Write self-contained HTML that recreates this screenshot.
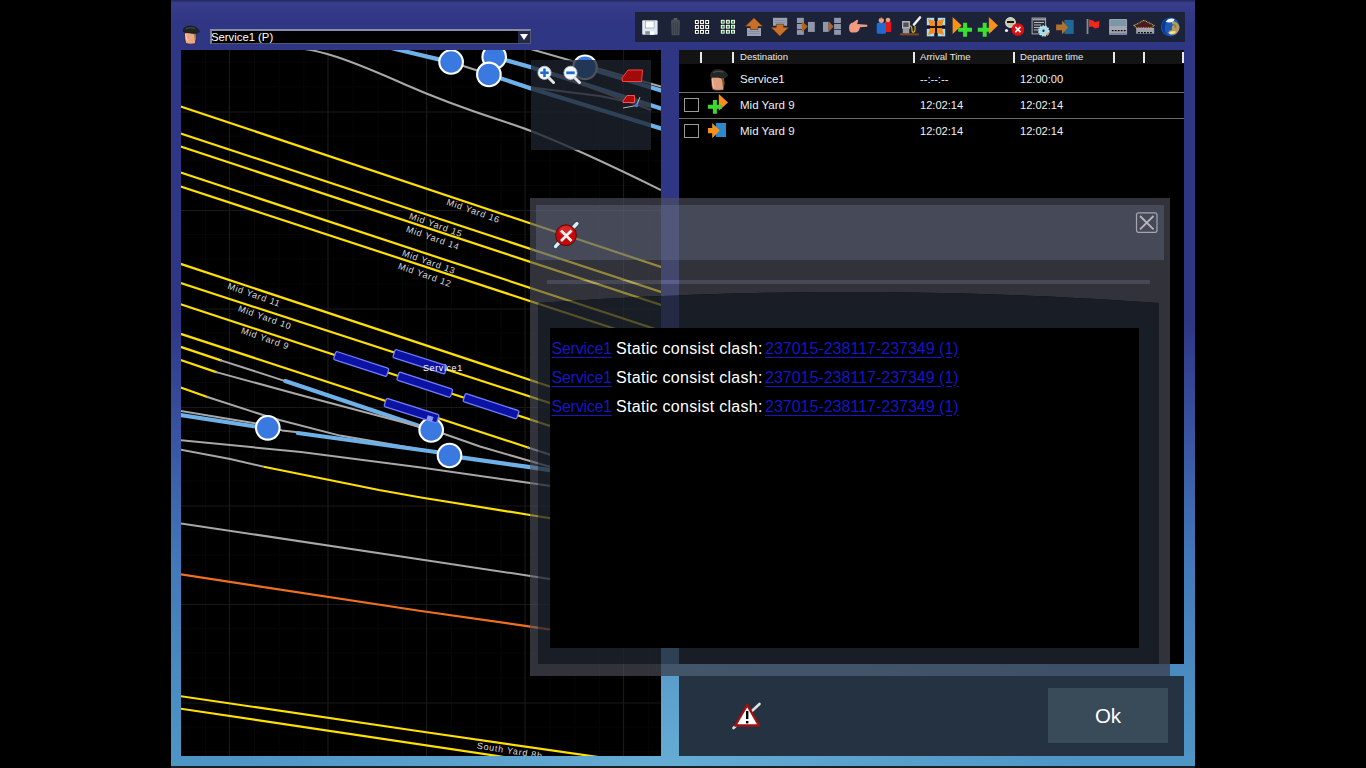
<!DOCTYPE html>
<html><head><meta charset="utf-8">
<style>
*{margin:0;padding:0;box-sizing:border-box}
html,body{width:1366px;height:768px;overflow:hidden;background:#000;font-family:"Liberation Sans",sans-serif;position:relative}
.a{position:absolute}
#frame{left:171px;top:0;width:1024px;height:766px;background:radial-gradient(ellipse 420px 260px at 490px 766px,rgba(140,210,235,0.38),rgba(140,210,235,0) 100%),linear-gradient(180deg,#23285e 0px,#3a3f8c 3px,#343a88 10px,#2f3684 24px,#2f3684 320px,#3a58a4 450px,#4278b8 560px,#4a8cc0 680px,#4e96c6 766px)}
#bottomdark{left:171px;top:766px;width:1024px;height:2px;background:#1a2228}
#dd{left:210px;top:29px;width:321px;height:15px;background:#000;border-top:2px solid #8a8ca8;border-left:2px solid #7c7e9c;border-bottom:1px solid #555870;border-right:1px solid #55586a}
#ddtxt{left:211px;top:30px;color:#fff;font-size:11.3px;line-height:14px;white-space:nowrap}
#tb{left:635px;top:12px;width:550px;height:30px;background:#1c2238}
#map{left:181px;top:50px;width:480px;height:706px;background:#000;overflow:hidden}
#tbl{left:679px;top:50px;width:505px;height:614px;background:#000}
#thead{left:679px;top:50px;width:505px;height:14px;background:#141414}
.hs{position:absolute;top:51.5px;width:1.6px;height:11.5px;background:#e8e8e8}
.ht{position:absolute;top:51px;color:#e8e8e8;font-size:9.6px;line-height:12px;white-space:nowrap}
.rt{position:absolute;color:#f0f0f0;font-size:11.5px;line-height:13px;white-space:nowrap;margin-top:1px}
.rl{position:absolute;left:679px;width:505px;height:1px;background:#6a6a6a}
.cb{position:absolute;left:684px;width:15px;height:14px;border:1px solid #9a9a9a;background:#000}
#bp{left:679px;top:676px;width:505px;height:80px;background:#243242}
#okb{left:1048px;top:688px;width:120px;height:55px;background:#394a58;color:#fff;font-size:20.5px;line-height:55px;text-align:center}
#dblack{left:550px;top:328px;width:589px;height:320px;background:#000}
.msg{position:absolute;font-size:16px;line-height:18px;white-space:nowrap;margin-top:1.5px}
.lnk{color:#1616c4;text-decoration:underline;text-underline-offset:3px}
.wt{color:#fff;letter-spacing:0.3px}
</style></head>
<body>
<div id="frame" class="a"></div>
<div id="bottomdark" class="a"></div>

<!-- face icon -->
<svg class="a" style="left:180px;top:22px" width="24" height="26" viewBox="180 22 24 26">
<path d="M184.8 32.5 Q184.3 39 185.8 43.6 Q190 44.6 195.2 43.8 Q196.5 38 195.8 32.5 Z" fill="#eaa888" stroke="#2a1830" stroke-width="0.7"/>
<path d="M185.5 34 Q186 38 187.5 41" stroke="#f8d0b8" stroke-width="1.2" fill="none"/>
<path d="M193 32.5 Q196.5 34 196.2 38 Q195.8 40 194.8 41 Q195 36 193 32.5Z" fill="#a87830"/>
<path d="M183.2 31.5 Q182.8 27 188.5 26 Q197 25.5 199.5 31.8 Q196 34.5 190 33 Q186 32.8 183.2 31.5Z" fill="#1e2422" stroke="#101018" stroke-width="0.6"/>
<path d="M186 28.5 Q190.5 27 195 28.3" stroke="#4a504c" stroke-width="1" fill="none"/>
</svg>
<div id="dd" class="a"></div>
<div id="ddtxt" class="a">Service1 (P)</div>
<svg class="a" style="left:518px;top:31px" width="12" height="12" viewBox="0 0 12 12"><rect width="12" height="12" fill="#22284e"/><path d="M2 3 L10 3 L6 9Z" fill="#fff"/></svg>

<div id="tb" class="a"></div>
<div id="tbicons"><svg class="a" style="left:635px;top:12px" width="550" height="30" viewBox="635 12 550 30">
<!-- 1 save -->
<rect x="642.2" y="20.2" width="15.4" height="14.6" rx="1" fill="#dfe9f4"/>
<rect x="645.6" y="21" width="8.5" height="7" fill="#fff" stroke="#8090a0" stroke-width="0.6"/>
<rect x="645.3" y="31.2" width="4.5" height="3.6" fill="#8a8f96"/>
<rect x="650" y="31.5" width="4" height="3.3" fill="#fff"/>
<!-- 2 trash -->
<path d="M671 20.5 Q675.3 17.5 680 20.5 L679.5 35.3 L671.5 35.3 Z" fill="#474b55"/>
<rect x="673.5" y="18" width="4" height="2" rx="1" fill="#5a5e68"/>
<path d="M673.5 23 L673.5 34 M675.5 23 L675.5 34 M677.5 23 L677.5 34" stroke="#3a3d45" stroke-width="0.8"/>
<!-- 3 grid white -->
<g fill="#fff" stroke="#000" stroke-width="0.3">
<rect x="694.8" y="19.9" width="4.2" height="4.2"/><rect x="699.9" y="19.9" width="4.2" height="4.2"/><rect x="705" y="19.9" width="4.2" height="4.2"/>
<rect x="694.8" y="24.9" width="4.2" height="4.2"/><rect x="699.9" y="24.9" width="4.2" height="4.2"/><rect x="705" y="24.9" width="4.2" height="4.2"/>
<rect x="694.8" y="29.8" width="4.2" height="4.2"/><rect x="699.9" y="29.8" width="4.2" height="4.2"/><rect x="705" y="29.8" width="4.2" height="4.2"/>
</g>
<g fill="#000">
<rect x="696" y="21.1" width="1.8" height="1.8"/><rect x="701.1" y="21.1" width="1.8" height="1.8"/><rect x="706.2" y="21.1" width="1.8" height="1.8"/>
<rect x="696" y="26.1" width="1.8" height="1.8"/><rect x="701.1" y="26.1" width="1.8" height="1.8"/><rect x="706.2" y="26.1" width="1.8" height="1.8"/>
<rect x="696" y="31" width="1.8" height="1.8"/><rect x="701.1" y="31" width="1.8" height="1.8"/><rect x="706.2" y="31" width="1.8" height="1.8"/>
</g>
<!-- 4 grid green -->
<g fill="#fff" stroke="#000" stroke-width="0.3">
<rect x="720.7" y="19.7" width="4.2" height="4.2"/><rect x="725.8" y="19.7" width="4.2" height="4.2"/><rect x="730.9" y="19.7" width="4.2" height="4.2"/>
<rect x="720.7" y="24.7" width="4.2" height="4.2"/><rect x="725.8" y="24.7" width="4.2" height="4.2"/><rect x="730.9" y="24.7" width="4.2" height="4.2"/>
<rect x="720.7" y="29.7" width="4.2" height="4.2"/><rect x="725.8" y="29.7" width="4.2" height="4.2"/><rect x="730.9" y="29.7" width="4.2" height="4.2"/>
</g>
<g fill="#1a9a2a">
<rect x="721.8" y="20.8" width="2" height="2"/><rect x="726.9" y="20.8" width="2" height="2"/><rect x="732" y="20.8" width="2" height="2"/>
<rect x="721.8" y="25.8" width="2" height="2"/><rect x="726.9" y="25.8" width="2" height="2"/><rect x="732" y="25.8" width="2" height="2"/>
<rect x="721.8" y="30.8" width="2" height="2"/><rect x="726.9" y="30.8" width="2" height="2"/><rect x="732" y="30.8" width="2" height="2"/>
</g>
<!-- 5 up -->
<rect x="747" y="28" width="14" height="8" fill="#9aa2b4"/>
<path d="M748.5 31.5 H759.5 M748.5 33.5 H759.5" stroke="#7a8294" stroke-width="0.6"/>
<path d="M754 17.8 L763 26.6 L758 26.6 L758 29.5 L750.3 29.5 L750.3 26.6 L745 26.6 Z" fill="#c87028" stroke="#3a2010" stroke-width="0.5"/>
<!-- 6 down -->
<rect x="773" y="17.8" width="14.2" height="8" fill="#9aa2b4"/>
<path d="M774.5 20.5 H785.5 M774.5 22.5 H785.5" stroke="#7a8294" stroke-width="0.6"/>
<path d="M776.3 24.2 L783.6 24.2 L783.6 27.2 L789 27.2 L779.8 36.2 L770.8 27.2 L776.3 27.2 Z" fill="#c87028" stroke="#3a2010" stroke-width="0.5"/>
<!-- 7 split -->
<g fill="#8e98aa"><rect x="796.9" y="17.8" width="7" height="5.2"/><rect x="796.9" y="23.9" width="7" height="5.2"/><rect x="796.9" y="29.8" width="7" height="5"/><rect x="808" y="21.9" width="6.8" height="10"/></g>
<path d="M801.9 21.3 L807.8 26.5 L801.9 32.2 Z" fill="#b06428"/>
<!-- 8 merge -->
<g fill="#8e98aa"><rect x="823" y="21.9" width="5.6" height="10"/><rect x="834.1" y="17.8" width="6.8" height="5.2"/><rect x="834.1" y="23.9" width="6.8" height="5.2"/><rect x="834.1" y="29.8" width="6.8" height="5"/></g>
<path d="M828.6 21.3 L833.6 26.5 L828.6 31.9 Z" fill="#b06428"/>
<!-- 9 hand -->
<path d="M849 28 Q849 23 853 22.5 L857 19.8 Q858.5 19.5 858 21.5 L857 24 L867 24.8 Q868 26 867 26.8 L860 27.2 Q859 32.5 855 32.6 L851 32.6 Q849 31.5 849 28 Z" fill="#f09a80"/>
<!-- 10 people -->
<rect x="884.9" y="21.5" width="6.4" height="10.5" rx="1" fill="#e01818"/>
<circle cx="888" cy="20" r="2.3" fill="#e8a080"/>
<rect x="876.7" y="22.8" width="9.3" height="11" rx="1.5" fill="#1f6cd0"/>
<circle cx="881.3" cy="20.3" r="2.6" fill="#e8a080"/>
<path d="M880 18.3 Q881.3 17 883 18.5" stroke="#8a5020" stroke-width="1" fill="none"/>
<!-- 11 fuel -->
<rect x="900" y="33.3" width="18.8" height="2.1" fill="#7a4820"/>
<rect x="902" y="21" width="8" height="7.8" fill="#b0b2b8"/>
<rect x="903.3" y="22.5" width="5.3" height="4.5" fill="#505458"/>
<rect x="902.8" y="28.8" width="6.4" height="4.5" fill="#9a9ca2"/>
<path d="M910 26 Q912 26 912 30 Q912 33 914 32 Q915.5 31 915 26" stroke="#e8c020" stroke-width="1.1" fill="none"/>
<path d="M914 24.5 L920 17.5" stroke="#f0f0f4" stroke-width="2.6" stroke-linecap="round"/>
<!-- 12 arrows in -->
<g fill="#a8dcf0"><rect x="926.8" y="17.8" width="7.4" height="7.4"/><rect x="937.8" y="17.8" width="7.4" height="7.4"/><rect x="926.8" y="28.9" width="7.4" height="7.4"/><rect x="937.8" y="28.9" width="7.4" height="7.4"/></g>
<g fill="#f08a20"><path d="M928 19 L934.7 25.7 L930 25.7 Z M928 19 L934.7 25.7 L934.7 21 Z"/><path d="M944 19 L937.3 25.7 L942 25.7 Z M944 19 L937.3 25.7 L937.3 21 Z"/><path d="M928 35 L934.7 28.3 L930 28.3 Z M928 35 L934.7 28.3 L934.7 33 Z"/><path d="M944 35 L937.3 28.3 L942 28.3 Z M944 35 L937.3 28.3 L937.3 33 Z"/></g>
<g fill="#f08a20"><rect x="930" y="21" width="5" height="5"/><rect x="937" y="21" width="5" height="5"/><rect x="930" y="28" width="5" height="5"/><rect x="937" y="28" width="5" height="5"/></g>
<path d="M936 18 V36 M927 27 H945" stroke="#1a1010" stroke-width="1.4"/>
<!-- 13 play + plus -->
<path d="M952.6 16.9 L961.7 25.4 L952.6 33.9 Z" fill="#f8901c"/>
<path d="M958.2 29.8 H972 M965.1 22.8 V36.8" stroke="#3ae030" stroke-width="4"/>
<!-- 14 plus + play -->
<path d="M977.8 29.8 H991.6 M984.7 22.8 V36.8" stroke="#3ae030" stroke-width="4"/>
<path d="M988.9 16.9 L998 25.4 L988.9 33.9 Z" fill="#f8901c"/>
<!-- 15 signal x -->
<circle cx="1010.5" cy="22.5" r="4.8" fill="#c8c8a0" stroke="#d8dce8" stroke-width="1.2"/>
<rect x="1007" y="21" width="7" height="2" fill="#111"/>
<circle cx="1006.5" cy="30.5" r="1.6" fill="#eee"/>
<circle cx="1017.9" cy="29.5" r="6.3" fill="#e01010"/>
<path d="M1015.3 26.9 L1020.5 32.1 M1020.5 26.9 L1015.3 32.1" stroke="#fff" stroke-width="1.6"/>
<!-- 16 doc gear -->
<rect x="1032.1" y="18.1" width="13.5" height="15.8" fill="#2a2e38" stroke="#a8aab0" stroke-width="1"/>
<rect x="1032.6" y="18.6" width="12.5" height="1.8" fill="#9a9ca2"/>
<path d="M1034 22.5 H1044 M1034 25 H1041 M1034 27.5 H1041 M1034 30 H1040" stroke="#b8bac0" stroke-width="1"/>
<circle cx="1043.8" cy="31" r="5" fill="#a8dce8" stroke="#c8ecf4" stroke-width="1.5" stroke-dasharray="1.5 1.2"/>
<circle cx="1043.5" cy="30.8" r="1.2" fill="#0a3a40"/>
<path d="M1046 34 L1050 32 L1047.5 36 Z" fill="#f89030"/>
<!-- 17 arrow into blue -->
<rect x="1064.3" y="19.9" width="9.4" height="14" fill="#1f6898"/>
<path d="M1056.1 24.5 L1062 24.5 L1062 20.4 L1068 27.4 L1062 34.5 L1062 30.3 L1056.1 30.3 Z" fill="#b07030"/>
<!-- 18 flag -->
<rect x="1086.6" y="19" width="1.8" height="15" fill="#8a8a90"/>
<path d="M1089 19.5 L1093 20.5 L1095 22 L1099.5 21 L1099 27.5 L1095 28.6 L1092.5 26.5 L1089 27 Z" fill="#f02818"/>
<!-- 19 box -->
<rect x="1109.1" y="18.9" width="18" height="16.1" rx="1" fill="#9ca2b2"/>
<rect x="1110.3" y="19.9" width="15.8" height="6.3" fill="#7a98a6"/>
<rect x="1109.6" y="26.2" width="17" height="6.6" fill="#a4a8b6"/>
<rect x="1109.6" y="32.8" width="17" height="2.2" fill="#7c8492"/>
<path d="M1111.8 30.6 H1125.8" stroke="#050505" stroke-width="1.2" stroke-dasharray="1.8 1.2"/>
<!-- 20 roof -->
<rect x="1136.2" y="28" width="18" height="5.7" fill="#9ca0b0"/>
<path d="M1134 25.5 L1144.1 20.2 L1154.2 25.5 L1151.6 27.9 L1136.5 27.9 Z" fill="#4a1a28" stroke="#c8b848" stroke-width="1.1" stroke-dasharray="1 0.7"/>
<path d="M1138 32.6 H1153" stroke="#050505" stroke-width="1.1" stroke-dasharray="1.8 1.2"/>
<!-- 21 globe -->
<circle cx="1170.2" cy="26.8" r="9.4" fill="#1c58b8"/>
<path d="M1161.5 27 Q1162 20 1168 18.2 Q1164 24 1165 31 Q1166 34 1169 36 Q1163 34 1161.5 27Z" fill="#0a3a90"/>
<path d="M1172 21 Q1178 21.5 1179.5 27 Q1179.5 32 1175 34.5 Q1170 35 1168 32.5 Q1169 30 1172 30 Q1171 27 1173 25 Q1171 23 1172 21Z" fill="#b89a60"/>
<path d="M1168.5 33 Q1172 30 1176 31.5 Q1175 34.5 1170.5 34.5Z" fill="#f0e090"/>
<path d="M1173 24.5 Q1176 25 1175.5 28" stroke="#788a30" stroke-width="1.6" fill="none"/>
<path d="M1165.5 21.5 Q1169 17.5 1174.5 19 Q1174 22 1170 22.5 Q1167 22.5 1165.5 21.5Z" fill="#f4f6f8"/>
</svg>
</div>

<div id="map" class="a">
<svg width="480" height="706" viewBox="181 50 480 706" id="msvg"><line x1="33.0" y1="50" x2="33.0" y2="756" stroke="#070707" stroke-width="1"/>
<line x1="57.6" y1="50" x2="57.6" y2="756" stroke="#070707" stroke-width="1"/>
<line x1="82.2" y1="50" x2="82.2" y2="756" stroke="#070707" stroke-width="1"/>
<line x1="106.9" y1="50" x2="106.9" y2="756" stroke="#070707" stroke-width="1"/>
<line x1="131.5" y1="50" x2="131.5" y2="756" stroke="#070707" stroke-width="1"/>
<line x1="156.1" y1="50" x2="156.1" y2="756" stroke="#070707" stroke-width="1"/>
<line x1="180.8" y1="50" x2="180.8" y2="756" stroke="#070707" stroke-width="1"/>
<line x1="205.4" y1="50" x2="205.4" y2="756" stroke="#070707" stroke-width="1"/>
<line x1="254.6" y1="50" x2="254.6" y2="756" stroke="#070707" stroke-width="1"/>
<line x1="279.2" y1="50" x2="279.2" y2="756" stroke="#070707" stroke-width="1"/>
<line x1="303.9" y1="50" x2="303.9" y2="756" stroke="#070707" stroke-width="1"/>
<line x1="353.1" y1="50" x2="353.1" y2="756" stroke="#070707" stroke-width="1"/>
<line x1="377.8" y1="50" x2="377.8" y2="756" stroke="#070707" stroke-width="1"/>
<line x1="402.4" y1="50" x2="402.4" y2="756" stroke="#070707" stroke-width="1"/>
<line x1="451.6" y1="50" x2="451.6" y2="756" stroke="#070707" stroke-width="1"/>
<line x1="476.2" y1="50" x2="476.2" y2="756" stroke="#070707" stroke-width="1"/>
<line x1="500.9" y1="50" x2="500.9" y2="756" stroke="#070707" stroke-width="1"/>
<line x1="550.1" y1="50" x2="550.1" y2="756" stroke="#070707" stroke-width="1"/>
<line x1="574.8" y1="50" x2="574.8" y2="756" stroke="#070707" stroke-width="1"/>
<line x1="599.4" y1="50" x2="599.4" y2="756" stroke="#070707" stroke-width="1"/>
<line x1="648.6" y1="50" x2="648.6" y2="756" stroke="#070707" stroke-width="1"/>
<line x1="181" y1="13.0" x2="661" y2="13.0" stroke="#070707" stroke-width="1"/>
<line x1="181" y1="37.6" x2="661" y2="37.6" stroke="#070707" stroke-width="1"/>
<line x1="181" y1="62.2" x2="661" y2="62.2" stroke="#070707" stroke-width="1"/>
<line x1="181" y1="86.9" x2="661" y2="86.9" stroke="#070707" stroke-width="1"/>
<line x1="181" y1="136.1" x2="661" y2="136.1" stroke="#070707" stroke-width="1"/>
<line x1="181" y1="160.8" x2="661" y2="160.8" stroke="#070707" stroke-width="1"/>
<line x1="181" y1="185.4" x2="661" y2="185.4" stroke="#070707" stroke-width="1"/>
<line x1="181" y1="234.6" x2="661" y2="234.6" stroke="#070707" stroke-width="1"/>
<line x1="181" y1="259.2" x2="661" y2="259.2" stroke="#070707" stroke-width="1"/>
<line x1="181" y1="283.9" x2="661" y2="283.9" stroke="#070707" stroke-width="1"/>
<line x1="181" y1="333.1" x2="661" y2="333.1" stroke="#070707" stroke-width="1"/>
<line x1="181" y1="357.8" x2="661" y2="357.8" stroke="#070707" stroke-width="1"/>
<line x1="181" y1="382.4" x2="661" y2="382.4" stroke="#070707" stroke-width="1"/>
<line x1="181" y1="431.6" x2="661" y2="431.6" stroke="#070707" stroke-width="1"/>
<line x1="181" y1="456.2" x2="661" y2="456.2" stroke="#070707" stroke-width="1"/>
<line x1="181" y1="480.9" x2="661" y2="480.9" stroke="#070707" stroke-width="1"/>
<line x1="181" y1="530.1" x2="661" y2="530.1" stroke="#070707" stroke-width="1"/>
<line x1="181" y1="554.8" x2="661" y2="554.8" stroke="#070707" stroke-width="1"/>
<line x1="181" y1="579.4" x2="661" y2="579.4" stroke="#070707" stroke-width="1"/>
<line x1="181" y1="628.6" x2="661" y2="628.6" stroke="#070707" stroke-width="1"/>
<line x1="181" y1="653.2" x2="661" y2="653.2" stroke="#070707" stroke-width="1"/>
<line x1="181" y1="677.9" x2="661" y2="677.9" stroke="#070707" stroke-width="1"/>
<line x1="181" y1="727.1" x2="661" y2="727.1" stroke="#070707" stroke-width="1"/>
<line x1="181" y1="751.8" x2="661" y2="751.8" stroke="#070707" stroke-width="1"/>
<line x1="229.5" y1="50" x2="229.5" y2="756" stroke="#191919" stroke-width="1.2"/>
<line x1="328.0" y1="50" x2="328.0" y2="756" stroke="#191919" stroke-width="1.2"/>
<line x1="426.5" y1="50" x2="426.5" y2="756" stroke="#191919" stroke-width="1.2"/>
<line x1="525.0" y1="50" x2="525.0" y2="756" stroke="#191919" stroke-width="1.2"/>
<line x1="623.5" y1="50" x2="623.5" y2="756" stroke="#191919" stroke-width="1.2"/>
<line x1="181" y1="112.0" x2="661" y2="112.0" stroke="#191919" stroke-width="1.2"/>
<line x1="181" y1="210.5" x2="661" y2="210.5" stroke="#191919" stroke-width="1.2"/>
<line x1="181" y1="309.0" x2="661" y2="309.0" stroke="#191919" stroke-width="1.2"/>
<line x1="181" y1="407.5" x2="661" y2="407.5" stroke="#191919" stroke-width="1.2"/>
<line x1="181" y1="506.0" x2="661" y2="506.0" stroke="#191919" stroke-width="1.2"/>
<line x1="181" y1="604.5" x2="661" y2="604.5" stroke="#191919" stroke-width="1.2"/>
<line x1="181" y1="703.0" x2="661" y2="703.0" stroke="#191919" stroke-width="1.2"/>
<path d="M178,105.6 L661,267" stroke="#ffe000" stroke-width="2.2" fill="none" stroke-linecap="round" stroke-linejoin="round"/>
<path d="M178,132.6 L661,292" stroke="#ffe000" stroke-width="2.2" fill="none" stroke-linecap="round" stroke-linejoin="round"/>
<path d="M178,145.7 L661,305" stroke="#ffe000" stroke-width="2.2" fill="none" stroke-linecap="round" stroke-linejoin="round"/>
<path d="M178,171.7 L661,331" stroke="#ffe000" stroke-width="2.2" fill="none" stroke-linecap="round" stroke-linejoin="round"/>
<path d="M178,185.7 L661,344" stroke="#ffe000" stroke-width="2.2" fill="none" stroke-linecap="round" stroke-linejoin="round"/>
<path d="M296,48 C320,50 345,58 405,84.5 S500,119 531,131 S600,160 661,190" stroke="#a8a8a8" stroke-width="2" fill="none"/>
<path d="M520,46 L661,86.5" stroke="#a8a8a8" stroke-width="2" fill="none" stroke-linecap="round" stroke-linejoin="round"/>
<path d="M380,45 L398.4,49.8 L438.8,59.4 L451,62" stroke="#6eb0e8" stroke-width="4.2" fill="none" stroke-linecap="round" stroke-linejoin="round"/>
<path d="M451,62 L475.7,70 L489,74.4" stroke="#a8a8a8" stroke-width="2" fill="none" stroke-linecap="round" stroke-linejoin="round"/>
<path d="M494,56.8 L531.1,67.3 L661,108.5" stroke="#6eb0e8" stroke-width="4.2" fill="none" stroke-linecap="round" stroke-linejoin="round"/>
<path d="M489,74.4 L531.1,88.4 L661,128.5" stroke="#6eb0e8" stroke-width="4.2" fill="none" stroke-linecap="round" stroke-linejoin="round"/>
<path d="M585,67.3 L661,90.5" stroke="#6eb0e8" stroke-width="4.2" fill="none" stroke-linecap="round" stroke-linejoin="round"/>
<path d="M552.3,73.2 L650.4,109.7" stroke="#9a9aa8" stroke-width="2" fill="none" stroke-linecap="round" stroke-linejoin="round"/>
<path d="M531.5,87.6 L600,96 L650.4,106.4" stroke="#9a9aa8" stroke-width="2" fill="none" stroke-linecap="round" stroke-linejoin="round"/>
<path d="M178,263 L661,423.4" stroke="#ffe000" stroke-width="2.2" fill="none" stroke-linecap="round" stroke-linejoin="round"/>
<path d="M178,282.2 L661,439.2" stroke="#ffe000" stroke-width="2.2" fill="none" stroke-linecap="round" stroke-linejoin="round"/>
<path d="M178,303.3 L661,462.7" stroke="#ffe000" stroke-width="2.2" fill="none" stroke-linecap="round" stroke-linejoin="round"/>
<path d="M178,333 L528,447.5" stroke="#ffe000" stroke-width="2.2" fill="none" stroke-linecap="round" stroke-linejoin="round"/>
<path d="M528,447.5 L661,491" stroke="#a8a8a8" stroke-width="2" fill="none" stroke-linecap="round" stroke-linejoin="round"/>
<path d="M178,346 L221,360.4" stroke="#ffe000" stroke-width="2.2" fill="none" stroke-linecap="round" stroke-linejoin="round"/>
<path d="M221,360.4 L285.3,381.1" stroke="#a8a8a8" stroke-width="2" fill="none" stroke-linecap="round" stroke-linejoin="round"/>
<path d="M285.3,381.1 L431,430" stroke="#6eb0e8" stroke-width="4.2" fill="none" stroke-linecap="round" stroke-linejoin="round"/>
<path d="M178,359.2 L216.2,372.1" stroke="#ffe000" stroke-width="2.2" fill="none" stroke-linecap="round" stroke-linejoin="round"/>
<path d="M216.2,372.1 L301,395.2 L418,426.3 L431,430" stroke="#a8a8a8" stroke-width="2" fill="none" stroke-linecap="round" stroke-linejoin="round"/>
<path d="M178,386.6 L207.4,397" stroke="#ffe000" stroke-width="2.2" fill="none" stroke-linecap="round" stroke-linejoin="round"/>
<path d="M207.4,397 L263,415 L279.5,420 L340,435.6 L436,452" stroke="#a8a8a8" stroke-width="2" fill="none" stroke-linecap="round" stroke-linejoin="round"/>
<path d="M178,410.5 L254.8,423.3 L282.1,430.4 L297.8,432.3" stroke="#a8a8a8" stroke-width="2" fill="none" stroke-linecap="round" stroke-linejoin="round"/>
<path d="M178,414.6 L253.7,426.25 L267.8,427.8" stroke="#6eb0e8" stroke-width="4.2" fill="none" stroke-linecap="round" stroke-linejoin="round"/>
<path d="M297.8,433 L436,452 L462.5,457.6 L530,467.2 L661,487" stroke="#6eb0e8" stroke-width="4.2" fill="none" stroke-linecap="round" stroke-linejoin="round"/>
<path d="M178,440 L301,452 L421,467.5 L530,483 L661,502" stroke="#a8a8a8" stroke-width="2" fill="none" stroke-linecap="round" stroke-linejoin="round"/>
<path d="M178,449.2 L230.2,459.1 L265,467" stroke="#a8a8a8" stroke-width="2" fill="none" stroke-linecap="round" stroke-linejoin="round"/>
<path d="M265,467 L379,490 L421,497.5 L530,515 L661,536" stroke="#ffe000" stroke-width="2.2" fill="none" stroke-linecap="round" stroke-linejoin="round"/>
<path d="M431,430 L444.4,434 L480,446.5 L530,461 L661,499" stroke="#a8a8a8" stroke-width="2" fill="none" stroke-linecap="round" stroke-linejoin="round"/>
<path d="M178,523 L421,559.4 L530.4,576 L661,596" stroke="#a8a8a8" stroke-width="2" fill="none" stroke-linecap="round" stroke-linejoin="round"/>
<path d="M178,574 L421,611 L530.4,626.6 L661,646" stroke="#f07020" stroke-width="2.2" fill="none" stroke-linecap="round" stroke-linejoin="round"/>
<path d="M178,695.8 L421,731.5 L588,755.6 L661,766" stroke="#ffe000" stroke-width="2.2" fill="none" stroke-linecap="round" stroke-linejoin="round"/>
<path d="M178,708.3 L494.8,755.6 L510,758" stroke="#ffe000" stroke-width="2.2" fill="none" stroke-linecap="round" stroke-linejoin="round"/>
<circle cx="451.1" cy="62" r="11.8" fill="#3a7ae0" stroke="#fff" stroke-width="2.1"/>
<circle cx="494.2" cy="56.8" r="11.8" fill="#3a7ae0" stroke="#fff" stroke-width="2.1"/>
<circle cx="488.9" cy="74.4" r="11.8" fill="#3a7ae0" stroke="#fff" stroke-width="2.1"/>
<circle cx="585" cy="67.3" r="11.8" fill="#3a7ae0" stroke="#fff" stroke-width="2.1"/>
<circle cx="267.8" cy="427.8" r="11.8" fill="#3a7ae0" stroke="#fff" stroke-width="2.1"/>
<circle cx="431.2" cy="430" r="11.8" fill="#3a7ae0" stroke="#fff" stroke-width="2.1"/>
<circle cx="449.5" cy="455.5" r="11.8" fill="#3a7ae0" stroke="#fff" stroke-width="2.1"/>
<g transform="translate(361.3,364.0) rotate(18.0)"><rect x="-27.9" y="-4.3" width="55.7" height="8.6" rx="1.5" fill="#0c12a4" stroke="#7080ff" stroke-width="1.3"/></g>
<g transform="translate(419.9,361.7) rotate(17.8)"><rect x="-27.2" y="-4.3" width="54.4" height="8.6" rx="1.5" fill="#0c12a4" stroke="#7080ff" stroke-width="1.3"/></g>
<g transform="translate(424.8,384.7) rotate(18.2)"><rect x="-28.2" y="-4.3" width="56.4" height="8.6" rx="1.5" fill="#0c12a4" stroke="#7080ff" stroke-width="1.3"/></g>
<g transform="translate(411.6,410.6) rotate(17.5)"><rect x="-27.7" y="-4.3" width="55.3" height="8.6" rx="1.5" fill="#0c12a4" stroke="#7080ff" stroke-width="1.3"/></g>
<g transform="translate(491.1,406.2) rotate(18.1)"><rect x="-28.3" y="-4.3" width="56.5" height="8.6" rx="1.5" fill="#0c12a4" stroke="#7080ff" stroke-width="1.3"/></g>
<rect x="427" y="416" width="6" height="5" fill="#8a9af8" transform="rotate(18 430 418)"/>
<text x="446" y="204.4" transform="rotate(19.5 446 204.4)" font-family="Liberation Sans" font-size="9" fill="#dcdcdc" letter-spacing="0.75">Mid Yard 16</text>
<text x="408.5" y="218.4" transform="rotate(19.5 408.5 218.4)" font-family="Liberation Sans" font-size="9" fill="#dcdcdc" letter-spacing="0.75">Mid Yard 15</text>
<text x="405.5" y="231.4" transform="rotate(19.5 405.5 231.4)" font-family="Liberation Sans" font-size="9" fill="#dcdcdc" letter-spacing="0.75">Mid Yard 14</text>
<text x="401.5" y="255.4" transform="rotate(19.5 401.5 255.4)" font-family="Liberation Sans" font-size="9" fill="#dcdcdc" letter-spacing="0.75">Mid Yard 13</text>
<text x="397.5" y="268.4" transform="rotate(19.5 397.5 268.4)" font-family="Liberation Sans" font-size="9" fill="#dcdcdc" letter-spacing="0.75">Mid Yard 12</text>
<text x="227" y="288.4" transform="rotate(19.5 227 288.4)" font-family="Liberation Sans" font-size="9" fill="#dcdcdc" letter-spacing="0.75">Mid Yard 11</text>
<text x="237.5" y="310.9" transform="rotate(19.5 237.5 310.9)" font-family="Liberation Sans" font-size="9" fill="#dcdcdc" letter-spacing="0.75">Mid Yard 10</text>
<text x="240.5" y="332.9" transform="rotate(19.5 240.5 332.9)" font-family="Liberation Sans" font-size="9" fill="#dcdcdc" letter-spacing="0.75">Mid Yard 9</text>
<text x="476.5" y="748.4" transform="rotate(9 476.5 748.4)" font-family="Liberation Sans" font-size="9" fill="#dcdcdc" letter-spacing="0.75">South Yard 8b</text>
<text x="423" y="371" font-family="Liberation Sans" font-size="9" fill="#fff" letter-spacing="0.6">Service1</text></svg>
</div>

<div id="tbl" class="a"></div>
<div id="thead" class="a"></div>
<div class="hs" style="left:700px"></div>
<div class="hs" style="left:732px"></div>
<div class="hs" style="left:913px"></div>
<div class="hs" style="left:1013px"></div>
<div class="hs" style="left:1113px"></div>
<div class="hs" style="left:1143px"></div>
<div class="hs" style="left:1182px"></div>
<div class="ht" style="left:740px">Destination</div>
<div class="ht" style="left:920px">Arrival Time</div>
<div class="ht" style="left:1020px">Departure time</div>

<div class="rt" style="left:740px;top:72px">Service1</div>
<div class="rt" style="left:920px;top:72px;font-size:11.1px">--:--:--</div>
<div class="rt" style="left:1020px;top:72px;font-size:11.1px">12:00:00</div>
<div class="rl" style="top:92px"></div>
<div class="cb" style="top:98px"></div>
<div class="rt" style="left:740px;top:98px">Mid Yard 9</div>
<div class="rt" style="left:920px;top:98px;font-size:11.1px">12:02:14</div>
<div class="rt" style="left:1020px;top:98px;font-size:11.1px">12:02:14</div>
<div class="rl" style="top:118px"></div>
<div class="cb" style="top:124px"></div>
<div class="rt" style="left:740px;top:124px">Mid Yard 9</div>
<div class="rt" style="left:920px;top:124px;font-size:11.1px">12:02:14</div>
<div class="rt" style="left:1020px;top:124px;font-size:11.1px">12:02:14</div>

<!-- row icons -->
<svg class="a" style="left:700px;top:64px" width="36" height="78" viewBox="700 64 36 78">
<path d="M711.2 77 Q711 85 712.5 89.5 Q716 91 723.5 90 Q724.5 84 724 77 Z" fill="#e0a080" stroke="#1a1010" stroke-width="0.6"/>
<path d="M712.3 79 Q712.5 84 714 88" stroke="#f0c0a0" stroke-width="1.3" fill="none"/>
<path d="M721 77.5 Q725 79 724.5 84 Q724 87 723 88 Q723 82 721 77.5Z" fill="#7a5020"/>
<path d="M710 77 Q709.5 71 716 69 Q726 68.5 728.2 76 Q725 80 718 77.5 Q713 77.8 710 77Z" fill="#222624"/>
<path d="M713 72.5 Q718 70.5 723.5 72" stroke="#4a4e4c" stroke-width="1.1" fill="none"/>
<path d="M718.8 94 L728 102.5 L718.8 110.8 Z" fill="#f8901c"/>
<path d="M707.9 106.8 H721.9 M714.9 100.1 V113.8" stroke="#3ad830" stroke-width="4"/>
<rect x="715.8" y="123" width="10.2" height="14" fill="#2a8ad0"/>
<path d="M708 128 L712.2 128 L712.2 123 L719.8 130.6 L712.2 138.3 L712.2 133.2 L708 133.2 Z" fill="#f8901c"/>
</svg>
<div id="bp" class="a"></div>
<div id="okb" class="a">Ok</div>

<svg class="a" style="left:530px;top:198px" width="640" height="478" viewBox="530 198 640 478">
<path fill-rule="evenodd" d="M530,198 H1170 V676 H530 Z M536,205 H1164 V260 H536 Z M547,280 H1150 V284 H547 Z M538,664 L538.0,303.0 L553.5,301.9 L569.0,300.9 L584.6,299.9 L600.1,299.0 L615.6,298.2 L631.1,297.4 L646.7,296.6 L662.2,296.0 L677.7,295.3 L693.2,294.8 L708.8,294.2 L724.3,293.8 L739.8,293.3 L755.4,293.0 L770.9,292.7 L786.4,292.4 L801.9,292.2 L817.5,292.1 L833.0,292.0 L848.5,292.0 L864.0,292.0 L879.5,292.1 L895.1,292.2 L910.6,292.4 L926.1,292.7 L941.6,293.0 L957.2,293.3 L972.7,293.8 L988.2,294.2 L1003.8,294.8 L1019.3,295.3 L1034.8,296.0 L1050.3,296.6 L1065.8,297.4 L1081.4,298.2 L1096.9,299.0 L1112.4,299.9 L1128.0,300.9 L1143.5,301.9 L1159.0,303.0 L1159,664 Z" fill="rgba(80,82,94,0.62)"/>
<path d="M536,205 H1164 V260 H536 Z" fill="rgba(94,99,117,0.75)"/>
<path d="M547,280 H1150 V284 H547 Z" fill="rgba(120,124,146,0.58)"/>
<path d="M538,664 L538.0,303.0 L553.5,301.9 L569.0,300.9 L584.6,299.9 L600.1,299.0 L615.6,298.2 L631.1,297.4 L646.7,296.6 L662.2,296.0 L677.7,295.3 L693.2,294.8 L708.8,294.2 L724.3,293.8 L739.8,293.3 L755.4,293.0 L770.9,292.7 L786.4,292.4 L801.9,292.2 L817.5,292.1 L833.0,292.0 L848.5,292.0 L864.0,292.0 L879.5,292.1 L895.1,292.2 L910.6,292.4 L926.1,292.7 L941.6,293.0 L957.2,293.3 L972.7,293.8 L988.2,294.2 L1003.8,294.8 L1019.3,295.3 L1034.8,296.0 L1050.3,296.6 L1065.8,297.4 L1081.4,298.2 L1096.9,299.0 L1112.4,299.9 L1128.0,300.9 L1143.5,301.9 L1159.0,303.0 L1159,664 Z" fill="rgba(33,38,49,0.77)"/>
</svg>
<div id="dblack" class="a"></div>
<div class="a" style="left:661px;top:664px;width:509px;height:12px;background:rgba(40,44,58,0.38)"></div>

<div class="msg lnk" style="left:551.5px;top:338px;letter-spacing:-0.25px">Service1</div>
<div class="msg wt" style="left:616px;top:338px">Static consist clash:</div>
<div class="msg lnk" style="left:765px;top:338px">237015-238117-237349 (1)</div>
<div class="msg lnk" style="left:551.5px;top:367px;letter-spacing:-0.25px">Service1</div>
<div class="msg wt" style="left:616px;top:367px">Static consist clash:</div>
<div class="msg lnk" style="left:765px;top:367px">237015-238117-237349 (1)</div>
<div class="msg lnk" style="left:551.5px;top:396px;letter-spacing:-0.25px">Service1</div>
<div class="msg wt" style="left:616px;top:396px">Static consist clash:</div>
<div class="msg lnk" style="left:765px;top:396px">237015-238117-237349 (1)</div>
<!-- close btn -->
<svg class="a" style="left:1135px;top:211px" width="24" height="23" viewBox="0 0 24 23">
<rect x="1.5" y="1.8" width="20.5" height="19.5" rx="2" fill="none" stroke="#a4a6b0" stroke-width="1.2"/>
<path d="M5 5 L18.5 18.3 M18.5 5 L5 18.3" stroke="#b4b6be" stroke-width="1.8"/>
</svg>
<!-- error icon -->
<svg class="a" style="left:550px;top:220px" width="32" height="30" viewBox="0 0 32 30">
<path d="M5.5 26.5 L27 3.5" stroke="#1a2030" stroke-width="5" stroke-linecap="round" opacity="0.5"/>
<path d="M5.5 26.5 L27 3.5" stroke="#d8eef4" stroke-width="3.4" stroke-linecap="round"/>
<circle cx="16" cy="15.2" r="10.4" fill="#c80808" stroke="#500808" stroke-width="0.9"/>
<ellipse cx="16" cy="11" rx="7" ry="5" fill="#e84040" opacity="0.55"/>
<path d="M11 10.5 L21.5 21 M21.5 10.5 L11 21" stroke="#fff4f4" stroke-width="2.6"/>
</svg>
<!-- warning icon -->
<svg class="a" style="left:730px;top:700px" width="34" height="32" viewBox="0 0 34 32">
<path d="M3.5 28 L29.5 4" stroke="#e0e0e0" stroke-width="2.6" stroke-linecap="round"/>
<path d="M17.2 4.8 L29 25.5 L5.2 25.5 Z" fill="#fff" stroke="#a01010" stroke-width="2.4" stroke-linejoin="round"/>
<path d="M17.2 11 L17.2 19" stroke="#000" stroke-width="2.4"/>
<rect x="16" y="21" width="2.4" height="2.4" fill="#000"/>
</svg>
<!-- zoom panel -->
<div class="a" style="left:531px;top:60px;width:120px;height:90px;background:rgba(28,34,46,0.78)"></div>
<svg class="a" style="left:534px;top:62px" width="120" height="50" viewBox="534 62 120 50">
<path d="M549 78 L553.5 82.5" stroke="#e8e8ec" stroke-width="3" stroke-linecap="round"/>
<circle cx="544.5" cy="72.8" r="6.6" fill="#f4f8ff" stroke="#b8c4d0" stroke-width="0.8"/>
<path d="M540.3 72.8 L548.7 72.8 M544.5 68.6 L544.5 77" stroke="#1f68d8" stroke-width="2.6"/>
<path d="M575 78 L579.5 82.5" stroke="#e8e8ec" stroke-width="3" stroke-linecap="round"/>
<circle cx="570.5" cy="72.8" r="6.6" fill="#f4f8ff" stroke="#b8c4d0" stroke-width="0.8"/>
<path d="M566.3 72.8 L574.7 72.8" stroke="#1f68d8" stroke-width="2.8"/>
<path d="M622 78 L628 70 L642.5 70 L641.5 81.5 L622.5 81.5 Z" fill="#a00a0a" stroke="#ff4040" stroke-width="1"/>
<path d="M623 101 L627 95.5 L634.5 95.5 L634.5 102.5 L623 102.5 Z" fill="#b00a0a" stroke="#ff5050" stroke-width="1"/>
<path d="M636.5 105.5 L640 97 M636.5 105.5 L623 108" stroke="#c8c8d8" stroke-width="0.9"/>
<circle cx="636.6" cy="105.4" r="1.8" fill="#3a78e0"/>
</svg>

</body></html>
